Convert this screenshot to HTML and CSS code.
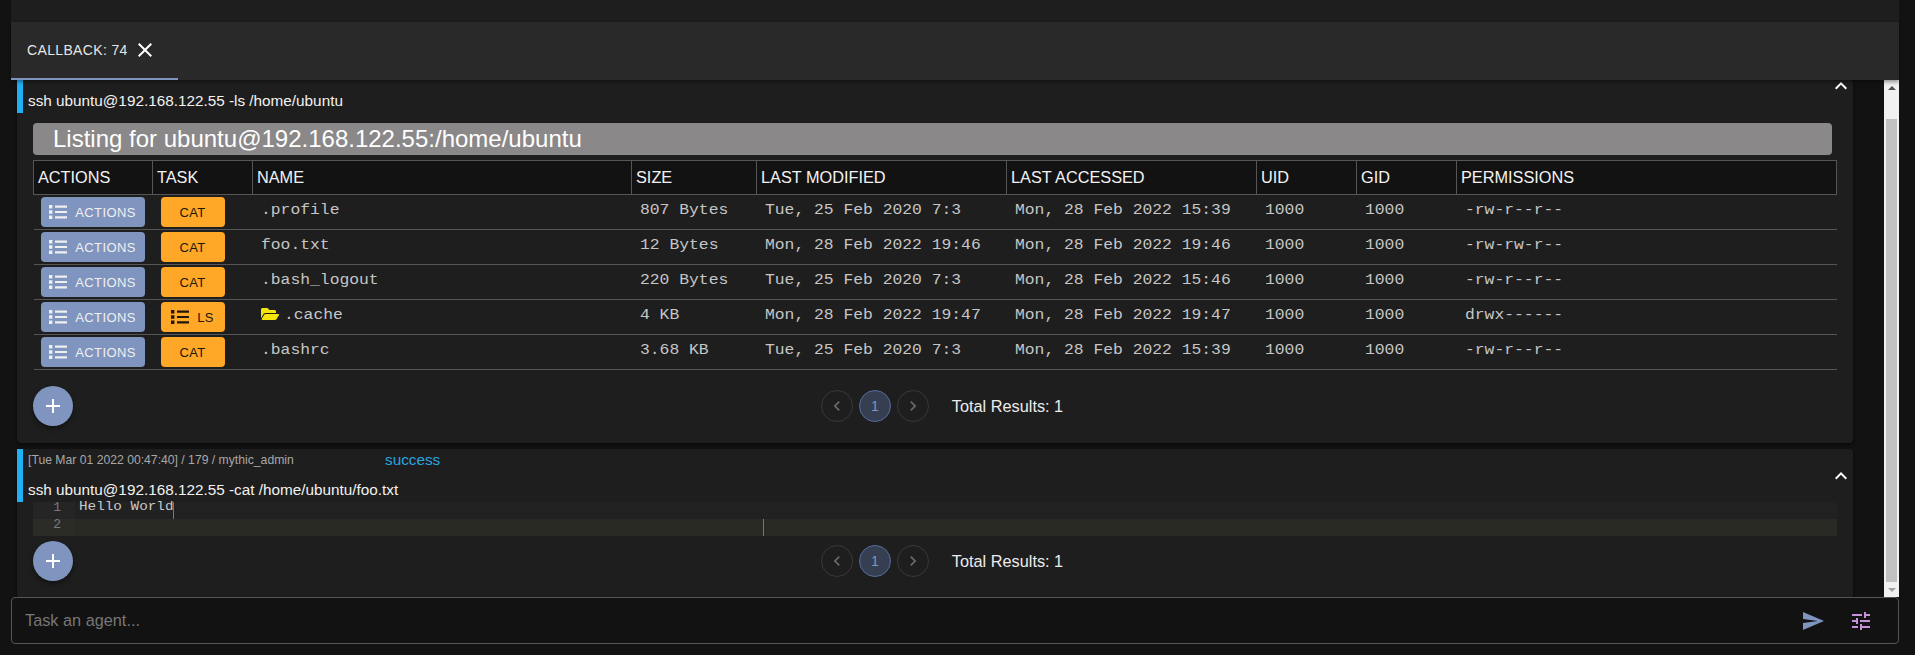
FILE: index.html
```html
<!DOCTYPE html>
<html lang="en">

<head>
    <meta charset="UTF-8">
    <meta name="viewport" content="width=device-width, initial-scale=1.0">
    <title>Callback 74</title>
    <link rel="stylesheet" href="styles.css">
</head>

<body>
    <svg class="defs" aria-hidden="true">
        <symbol id="i-list" viewBox="0 0 18 14">
            <path d="M0 0h3.4v3.4H0zM0 5.3h3.4v3.4H0zM0 10.6h3.4V14H0zM6 .6h12v2.2H6zM6 5.9h12v2.2H6zM6 11.2h12v2.2H6z" />
        </symbol>
        <symbol id="i-close" viewBox="0 0 24 24">
            <path d="M19 6.41L17.59 5 12 10.59 6.41 5 5 6.41 10.59 12 5 17.59 6.41 19 12 13.41 17.59 19 19 17.59 13.41 12z" />
        </symbol>
        <symbol id="i-less" viewBox="0 0 24 24">
            <path d="M12 8l-6 6 1.41 1.41L12 10.83l4.59 4.58L18 14z" />
        </symbol>
        <symbol id="i-add" viewBox="0 0 24 24">
            <path d="M19 13h-6v6h-2v-6H5v-2h6V5h2v6h6v2z" />
        </symbol>
        <symbol id="i-prev" viewBox="0 0 24 24">
            <path d="M15.41 7.41L14 6l-6 6 6 6 1.41-1.41L10.83 12z" />
        </symbol>
        <symbol id="i-next" viewBox="0 0 24 24">
            <path d="M10 6L8.59 7.41 13.17 12l-4.58 4.59L10 18l6-6z" />
        </symbol>
        <symbol id="i-folder" viewBox="0 0 576 512">
            <path d="M572.694 292.093L500.27 416.248A63.997 63.997 0 0 1 444.989 448H45.025c-18.523 0-30.064-20.093-20.731-36.093l72.424-124.155A64 64 0 0 1 152 256h399.964c18.523 0 30.064 20.093 20.73 36.093zM152 224h328v-48c0-26.51-21.49-48-48-48H272l-64-64H48C21.49 64 0 85.49 0 112v278.046l69.077-118.418C86.214 242.25 117.989 224 152 224z" />
        </symbol>
    </svg>

    <div class="app">
        <div class="top-strip"></div>

        <div class="tabbar">
            <div class="tab">
                <span>CALLBACK: 74</span>
                <svg class="tab-close"><use href="#i-close" /></svg>
            </div>
        </div>

        <div class="panel">
            <div class="feed">
                <!-- ls task, already scrolled past its meta line -->
                <div class="card">
                    <svg class="collapse collapse-first"><use href="#i-less" /></svg>
                    <div class="card-head">
                        <div class="cmd">ssh ubuntu@192.168.122.55 -ls /home/ubuntu</div>
                    </div>
                    <div class="listing-title">Listing for ubuntu@192.168.122.55:/home/ubuntu</div>
                    <table class="listing">
                        <colgroup>
                            <col class="c-actions">
                            <col class="c-task">
                            <col class="c-name">
                            <col class="c-size">
                            <col class="c-date">
                            <col class="c-date">
                            <col class="c-id">
                            <col class="c-id">
                            <col class="c-perm">
                        </colgroup>
                        <thead>
                            <tr>
                                <th>ACTIONS</th>
                                <th>TASK</th>
                                <th>NAME</th>
                                <th>SIZE</th>
                                <th>LAST MODIFIED</th>
                                <th>LAST ACCESSED</th>
                                <th>UID</th>
                                <th>GID</th>
                                <th>PERMISSIONS</th>
                            </tr>
                        </thead>
                        <tbody>
                            <tr>
                                <td class="btn-cell"><button class="btn btn-actions"><svg class="btn-icon"><use href="#i-list" /></svg>ACTIONS</button></td>
                                <td class="btn-cell"><button class="btn btn-task">CAT</button></td>
                                <td><span class="mono">.profile</span></td>
                                <td><span class="mono">807 Bytes</span></td>
                                <td><span class="mono">Tue, 25 Feb 2020 7:3</span></td>
                                <td><span class="mono">Mon, 28 Feb 2022 15:39</span></td>
                                <td><span class="mono">1000</span></td>
                                <td><span class="mono">1000</span></td>
                                <td><span class="mono">-rw-r--r--</span></td>
                            </tr>
                            <tr>
                                <td class="btn-cell"><button class="btn btn-actions"><svg class="btn-icon"><use href="#i-list" /></svg>ACTIONS</button></td>
                                <td class="btn-cell"><button class="btn btn-task">CAT</button></td>
                                <td><span class="mono">foo.txt</span></td>
                                <td><span class="mono">12 Bytes</span></td>
                                <td><span class="mono">Mon, 28 Feb 2022 19:46</span></td>
                                <td><span class="mono">Mon, 28 Feb 2022 19:46</span></td>
                                <td><span class="mono">1000</span></td>
                                <td><span class="mono">1000</span></td>
                                <td><span class="mono">-rw-rw-r--</span></td>
                            </tr>
                            <tr>
                                <td class="btn-cell"><button class="btn btn-actions"><svg class="btn-icon"><use href="#i-list" /></svg>ACTIONS</button></td>
                                <td class="btn-cell"><button class="btn btn-task">CAT</button></td>
                                <td><span class="mono">.bash_logout</span></td>
                                <td><span class="mono">220 Bytes</span></td>
                                <td><span class="mono">Tue, 25 Feb 2020 7:3</span></td>
                                <td><span class="mono">Mon, 28 Feb 2022 15:46</span></td>
                                <td><span class="mono">1000</span></td>
                                <td><span class="mono">1000</span></td>
                                <td><span class="mono">-rw-r--r--</span></td>
                            </tr>
                            <tr>
                                <td class="btn-cell"><button class="btn btn-actions"><svg class="btn-icon"><use href="#i-list" /></svg>ACTIONS</button></td>
                                <td class="btn-cell"><button class="btn btn-task"><svg class="btn-icon"><use href="#i-list" /></svg>LS</button></td>
                                <td><svg class="folder"><use href="#i-folder" /></svg><span class="mono">.cache</span></td>
                                <td><span class="mono">4 KB</span></td>
                                <td><span class="mono">Mon, 28 Feb 2022 19:47</span></td>
                                <td><span class="mono">Mon, 28 Feb 2022 19:47</span></td>
                                <td><span class="mono">1000</span></td>
                                <td><span class="mono">1000</span></td>
                                <td><span class="mono">drwx------</span></td>
                            </tr>
                            <tr>
                                <td class="btn-cell"><button class="btn btn-actions"><svg class="btn-icon"><use href="#i-list" /></svg>ACTIONS</button></td>
                                <td class="btn-cell"><button class="btn btn-task">CAT</button></td>
                                <td><span class="mono">.bashrc</span></td>
                                <td><span class="mono">3.68 KB</span></td>
                                <td><span class="mono">Tue, 25 Feb 2020 7:3</span></td>
                                <td><span class="mono">Mon, 28 Feb 2022 15:39</span></td>
                                <td><span class="mono">1000</span></td>
                                <td><span class="mono">1000</span></td>
                                <td><span class="mono">-rw-r--r--</span></td>
                            </tr>
                        </tbody>
                    </table>
                    <div class="card-foot card-foot-first">
                        <button class="fab"><svg><use href="#i-add" /></svg></button>
                        <div class="pager">
                            <div class="page"><svg><use href="#i-prev" /></svg></div>
                            <div class="page page-on">1</div>
                            <div class="page"><svg><use href="#i-next" /></svg></div>
                            <div class="total">Total Results: 1</div>
                        </div>
                    </div>
                </div>

                <!-- cat task -->
                <div class="card">
                    <svg class="collapse"><use href="#i-less" /></svg>
                    <div class="card-head card-head-meta">
                        <div class="meta">
                            <span class="meta-info">[Tue Mar 01 2022 00:47:40] / 179 / mythic_admin</span>
                            <span class="status">success</span>
                        </div>
                        <div class="cmd">ssh ubuntu@192.168.122.55 -cat /home/ubuntu/foo.txt</div>
                    </div>
                    <div class="editor">
                        <div class="gutter">
                            <div class="gutter-line">1</div>
                            <div class="gutter-line gutter-active">2</div>
                        </div>
                        <div class="code">
                            <div class="code-line"><span class="code-text">Hello World</span><span class="caret"></span></div>
                            <div class="code-line code-active"><span class="caret caret-far"></span></div>
                        </div>
                    </div>
                    <div class="card-foot">
                        <button class="fab"><svg><use href="#i-add" /></svg></button>
                        <div class="pager">
                            <div class="page"><svg><use href="#i-prev" /></svg></div>
                            <div class="page page-on">1</div>
                            <div class="page"><svg><use href="#i-next" /></svg></div>
                            <div class="total">Total Results: 1</div>
                        </div>
                    </div>
                </div>
            </div>

            <div class="scrollbar">
                <div class="sb-btn"><span class="sb-up"></span></div>
                <div class="sb-track"><div class="sb-thumb"></div></div>
                <div class="sb-btn"><span class="sb-down"></span></div>
            </div>
        </div>

        <div class="task-input">
            <span class="placeholder">Task an agent...</span>
            <svg class="send" viewBox="0 0 24 24"><path d="M2.01 21L23 12 2.01 3 2 10l15 2-15 2z" /></svg>
            <svg class="tune" viewBox="0 0 24 24"><path d="M3 17v2h6v-2H3zM3 5v2h10V5H3zm10 16v-2h8v-2h-8v-2h-2v6h2zM7 9v2H3v2h4v2h2V9H7zm14 4v-2H11v2h10zm-6-4h2V7h4V5h-4V3h-2v6z" /></svg>
        </div>
    </div>
</body>

</html>
```

FILE: styles.css
```css
* {
    margin: 0;
    padding: 0;
    box-sizing: border-box;
}

html,
body {
    height: 100%;
    overflow: hidden;
}

body {
    background-color: #121212;
    color: #fff;
    font: 16px "Liberation Sans", Arial, sans-serif;
}

button {
    font-family: "Liberation Sans", Arial, sans-serif;
    border: 0;
}

.defs {
    display: none;
}

.app {
    height: 655px;
    padding: 0 16px 0 11px;
    display: flex;
    flex-direction: column;
}

.top-strip {
    height: 22px;
    background-color: #1e1e1e;
}

.tabbar {
    height: 58px;
    background-color: #292929;
    box-shadow: 0 2px 4px rgba(0, 0, 0, .4);
    position: relative;
    z-index: 2;
}

.tab {
    width: 167px;
    height: 58px;
    padding-left: 16px;
    display: flex;
    align-items: center;
    border-bottom: 2px solid #7f94bf;
    font-size: 14px;
    letter-spacing: .35px;
    color: #e6e6e6;
}

.tab-close {
    width: 24px;
    height: 24px;
    margin-left: 5px;
    fill: #fff;
}

.panel {
    height: 517px;
    display: flex;
    overflow: hidden;
}

.feed {
    flex: 1;
    padding-left: 6px;
    padding-right: 31px;
    overflow: hidden;
}

.card {
    background-color: #1e1e1e;
    border-radius: 4px;
    position: relative;
    box-shadow: 0 2px 3px rgba(0, 0, 0, .5);
    margin-bottom: 6px;
}

.collapse {
    position: absolute;
    right: 0;
    top: 15px;
    width: 24px;
    height: 24px;
    fill: #fff;
}

.collapse-first {
    top: -6px;
}

.card-head {
    border-left: 6px solid #22b0f5;
    padding: 11px 0 2px 5px;
}

.card-head-meta {
    padding-top: 0;
}

.cmd {
    font-size: 15.3px;
    line-height: 20px;
    color: #f2f2f2;
}

.meta {
    height: 22px;
    margin-bottom: 9px;
    display: flex;
    align-items: center;
}

.meta-info {
    width: 357px;
    font-size: 12.2px;
    color: #a8a8a8;
}

.status {
    font-size: 15.3px;
    color: #2aa4e0;
}

.listing-title {
    height: 32px;
    width: 1799px;
    margin: 10px 0 5px 16px;
    padding-left: 20px;
    background-color: #8a8888;
    border-radius: 4px;
    font-size: 24px;
    line-height: 32px;
}

.listing {
    width: 1803px;
    margin-left: 16px;
    table-layout: fixed;
    border-collapse: collapse;
}

.c-actions {
    width: 119px;
}

.c-task {
    width: 100px;
}

.c-name {
    width: 379px;
}

.c-size {
    width: 125px;
}

.c-date {
    width: 250px;
}

.c-id {
    width: 100px;
}

.c-perm {
    width: 380px;
}

.listing th {
    height: 34px;
    padding-left: 4px;
    background-color: #121212;
    border: 1px solid #555;
    font-size: 16.3px;
    font-weight: normal;
    text-align: left;
    color: #f2f2f2;
}

.listing td {
    height: 35px;
    padding: 0 0 4px 8px;
    border-bottom: 1px solid #555;
    font: 14px "Liberation Mono", "Courier New", monospace;
    color: #c6c6c6;
    white-space: nowrap;
}

.listing td.btn-cell {
    padding: 0;
}

/* the reference face is wider than Liberation Mono: stretch to its 9.8px advance */
.mono {
    display: inline-block;
    transform: scaleX(1.167);
    transform-origin: left;
}

.btn {
    height: 30px;
    border-radius: 4px;
    display: flex;
    align-items: center;
    justify-content: center;
    font-size: 13px;
    letter-spacing: .37px;
}

.btn-actions {
    width: 104px;
    margin-left: 7px;
    background-color: #7f94bf;
    color: #f0f0f0;
}

.btn-task {
    width: 64px;
    margin-left: 8px;
    background-color: #ffa726;
    color: #20170a;
}

.btn-icon {
    width: 18px;
    height: 14px;
    margin-right: 8px;
    fill: currentColor;
}

.folder {
    width: 18px;
    height: 16px;
    margin-top: -3px;
    margin-right: 5px;
    vertical-align: middle;
    fill: #f5e50a;
}

.card-foot {
    padding: 5px 42px 17px 16px;
    display: flex;
    align-items: center;
}

.card-foot-first {
    padding-top: 16px;
}

.fab {
    width: 40px;
    height: 40px;
    border-radius: 50%;
    background-color: #7f94bf;
    box-shadow: 0 3px 5px rgba(0, 0, 0, .4);
    display: flex;
    align-items: center;
    justify-content: center;
}

.fab svg {
    width: 24px;
    height: 24px;
    fill: #fff;
}

.pager {
    flex: 1;
    display: flex;
    align-items: center;
    justify-content: center;
    gap: 6px;
}

.page {
    width: 32px;
    height: 32px;
    border: 1px solid #383838;
    border-radius: 50%;
    display: flex;
    align-items: center;
    justify-content: center;
    font-size: 14px;
}

.page svg {
    width: 20px;
    height: 20px;
    fill: #6a6a6a;
}

.page-on {
    background-color: #363f52;
    border-color: #566c9b;
    color: #7f94bf;
}

.total {
    margin-left: 17px;
    font-size: 16.3px;
    color: #ececec;
}

.editor {
    width: 1804px;
    margin-left: 16px;
    display: flex;
    font: 12px/11px "Liberation Mono", "Courier New", monospace;
}

.gutter {
    width: 42px;
    background-color: #252525;
    color: #7a7a7a;
    font-size: 13px;
    text-align: right;
}

.gutter-line {
    height: 17px;
    padding-right: 14px;
}

.gutter-active {
    background-color: #2c2c27;
}

.code {
    flex: 1;
    background-color: #212121;
    color: #c8c8c8;
}

.code-line {
    height: 17px;
    padding-left: 4px;
    white-space: pre;
}

.code-text {
    display: inline-block;
    width: 94px;
    transform: scaleX(1.193);
    transform-origin: left;
}

.code-active {
    background-color: #2a2a25;
}

.caret {
    display: inline-block;
    width: 1px;
    height: 17px;
    vertical-align: top;
    background-color: #777;
}

.caret-far {
    margin-left: 684px;
}

.scrollbar {
    width: 15px;
    background-color: #f1f1f1;
    display: flex;
    flex-direction: column;
}

.sb-btn {
    height: 15px;
    display: flex;
    align-items: center;
    justify-content: center;
}

.sb-up {
    border: 4px solid transparent;
    border-top: 0;
    border-bottom: 4px solid #505050;
}

.sb-down {
    border: 4px solid transparent;
    border-bottom: 0;
    border-top: 4px solid #a3a3a3;
}

.sb-track {
    flex: 1;
    padding: 24px 2px 0;
}

.sb-thumb {
    height: 463px;
    background-color: #c1c1c1;
}

.task-input {
    height: 47px;
    padding-left: 13px;
    padding-right: 25px;
    border: 1px solid #555;
    border-radius: 4px;
    display: flex;
    align-items: center;
}

.placeholder {
    flex: 1;
    font-size: 16.3px;
    color: #777;
}

.send {
    width: 24px;
    height: 24px;
    fill: #7f94bf;
}

.tune {
    width: 24px;
    height: 24px;
    margin-left: 24px;
    fill: #c792d8;
}
```
